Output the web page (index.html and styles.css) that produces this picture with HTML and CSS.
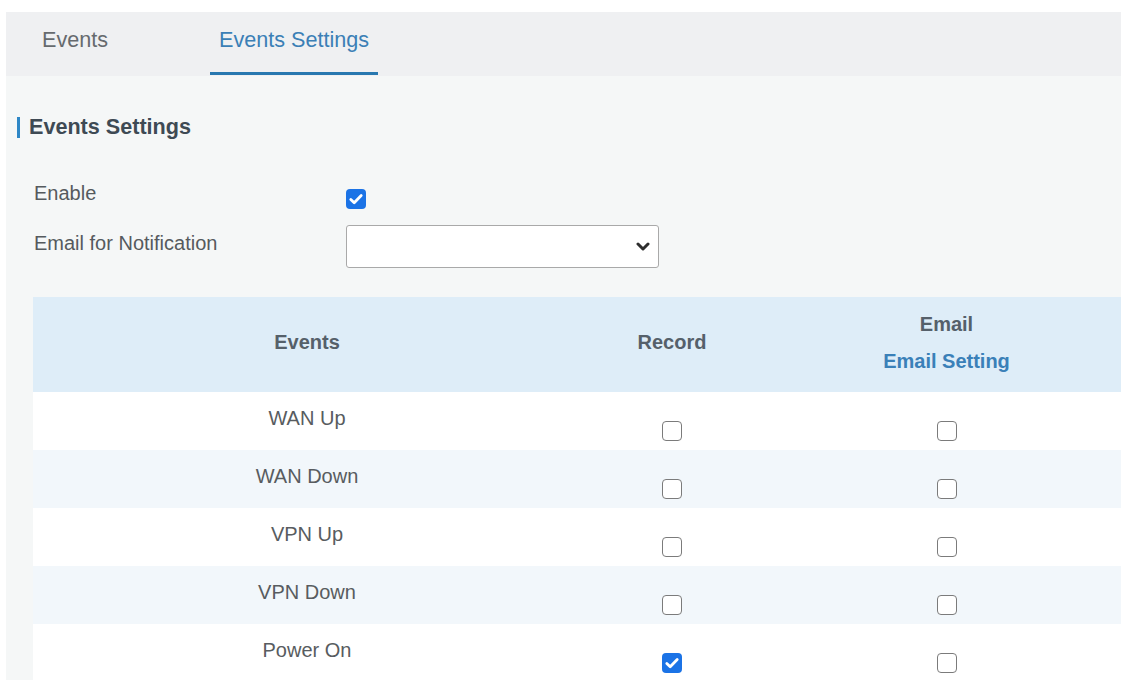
FILE: index.html
```html
<!DOCTYPE html>
<html lang="en">
<head>
<meta charset="utf-8">
<title>Events Settings</title>
<link rel="stylesheet" href="styles.css">
</head>
<body>
<div class="page">
  <div class="panel">
    <nav class="tabs">
      <a class="tab">Events</a>
      <a class="tab active">Events Settings</a>
    </nav>

    <section class="content">
      <h2 class="section-title">Events Settings</h2>

      <div class="form">
        <div class="form-row">
          <label class="form-label">Enable</label>
          <div class="form-control control-check">
            <span class="cb checked"><svg viewBox="0 0 20 20"><path d="M4.8 10.4l3.4 3.4 7-7.2"/></svg></span>
          </div>
        </div>
        <div class="form-row">
          <label class="form-label label-select">Email for Notification</label>
          <div class="form-control">
            <div class="select">
              <svg class="chev" viewBox="0 0 14 9"><path d="M2 2l5 5 5-5"/></svg>
            </div>
          </div>
        </div>
      </div>

      <div class="table-wrap">
        <table class="events-table">
          <colgroup>
            <col class="c-event">
            <col class="c-record">
            <col class="c-email">
          </colgroup>
          <thead>
            <tr>
              <th>Events</th>
              <th>Record</th>
              <th>
                <div>Email</div>
                <div class="th-link">Email Setting</div>
              </th>
            </tr>
          </thead>
          <tbody>
            <tr>
              <td class="name">WAN Up</td>
              <td class="chk"><span class="cb"></span></td>
              <td class="chk"><span class="cb"></span></td>
            </tr>
            <tr>
              <td class="name">WAN Down</td>
              <td class="chk"><span class="cb"></span></td>
              <td class="chk"><span class="cb"></span></td>
            </tr>
            <tr>
              <td class="name">VPN Up</td>
              <td class="chk"><span class="cb"></span></td>
              <td class="chk"><span class="cb"></span></td>
            </tr>
            <tr>
              <td class="name">VPN Down</td>
              <td class="chk"><span class="cb"></span></td>
              <td class="chk"><span class="cb"></span></td>
            </tr>
            <tr>
              <td class="name">Power On</td>
              <td class="chk"><span class="cb checked"><svg viewBox="0 0 20 20"><path d="M4.8 10.4l3.4 3.4 7-7.2"/></svg></span></td>
              <td class="chk"><span class="cb"></span></td>
            </tr>
          </tbody>
        </table>
      </div>
    </section>
  </div>
</div>
</body>
</html>
```

FILE: styles.css
```css
html, body {
  margin: 0;
  padding: 0;
  background: #ffffff;
  overflow: hidden;
}

body {
  font-family: "Liberation Sans", Arial, sans-serif;
  color: #5a5a5a;
  width: 1121px;
  height: 680px;
}

.page {
  padding: 12px 0 0 6px;
  height: 100%;
  box-sizing: border-box;
}

.panel {
  background: #f5f7f7;
  height: 100%;
  overflow: hidden;
}

/* ---- tab strip ---- */
.tabs {
  display: flex;
  align-items: flex-start;
  gap: 93px;
  height: 64px;
  padding-left: 27px;
  background: #eff0f2;
}

.tab {
  box-sizing: border-box;
  height: 63px;
  padding: 15px 9px 0;
  font-size: 21.6px;
  line-height: 26px;
  color: #666a6e;
  border-bottom: 3px solid transparent;
  cursor: pointer;
}

.tab.active {
  color: #3b7fb6;
  border-bottom-color: #2878b0;
}

/* ---- content ---- */
.content {
  padding: 38px 0 0 11px;
}

.section-title {
  margin: 0;
  display: flex;
  align-items: center;
  gap: 9px;
  font-size: 21.6px;
  line-height: 26px;
  font-weight: bold;
  color: #3e4a54;
}

.section-title::before {
  content: "";
  width: 3px;
  height: 21px;
  background: #2e87c6;
}

.form {
  display: flex;
  flex-direction: column;
  gap: 16px;
  margin-top: 41px;
  padding-left: 17px;
}

.form-row {
  display: grid;
  grid-template-columns: 312px auto;
  align-items: start;
}

.form-label {
  font-size: 20px;
  line-height: 24px;
  color: #555a5e;
}

.label-select {
  margin-top: 6px;
}

.control-check {
  padding-top: 8px;
}

.select {
  position: relative;
  box-sizing: border-box;
  width: 313px;
  height: 43px;
  background: #ffffff;
  border: 1px solid #a9a9a9;
  border-radius: 3px;
}

.chev {
  position: absolute;
  right: 8px;
  top: 16px;
  width: 14px;
  height: 9px;
  fill: none;
  stroke: #2e2e2e;
  stroke-width: 3;
  stroke-linecap: round;
  stroke-linejoin: round;
}

/* ---- checkbox ---- */
.cb {
  display: inline-block;
  box-sizing: border-box;
  width: 20px;
  height: 20px;
  border: 1.5px solid #7b7b7b;
  border-radius: 4px;
  background: #ffffff;
  vertical-align: top;
}

.cb.checked {
  background: #1b73e6;
  border: 0;
}

.cb svg {
  display: block;
  width: 20px;
  height: 20px;
  fill: none;
  stroke: #ffffff;
  stroke-width: 2.8;
  stroke-linecap: round;
  stroke-linejoin: round;
}

/* ---- events table ---- */
.table-wrap {
  margin-top: 29px;
  padding-left: 16px;
}

.events-table {
  border-collapse: collapse;
  table-layout: fixed;
  width: 1097px;
}

.c-event { width: 548px; }
.c-record { width: 182px; }
.c-email { width: 367px; }

.events-table th {
  height: 95px;
  box-sizing: border-box;
  padding: 0 0 5px;
  background: #deedf8;
  font-size: 20px;
  line-height: 26px;
  font-weight: bold;
  color: #55606a;
  text-align: center;
  vertical-align: middle;
}

.th-link {
  margin-top: 11px;
  color: #3a80b8;
}

.events-table td {
  height: 58px;
  box-sizing: border-box;
  padding: 0;
  text-align: center;
  vertical-align: top;
  background: #ffffff;
}

.events-table tbody tr:nth-child(even) td {
  background: #f2f7fb;
}

.events-table td.name {
  padding-top: 13px;
  font-size: 20px;
  line-height: 26px;
  color: #585c60;
}

.events-table td.chk {
  padding-top: 29px;
  line-height: 0;
}
```
